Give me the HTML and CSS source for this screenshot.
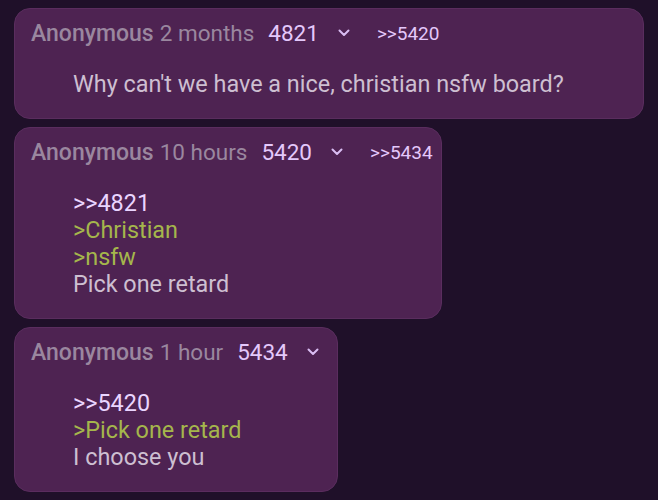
FILE: index.html
```html
<!DOCTYPE html>
<html lang="en">
<head>
    <meta charset="UTF-8">
    <meta name="viewport" content="width=device-width, initial-scale=1.0">
    <title>Thread</title>
    <link rel="stylesheet" href="styles.css">
</head>
<body>
    <main class="thread">
        <article class="post wide">
            <div class="post-head">
                <span class="name">Anonymous</span>
                <span class="time">2 months</span>
                <span class="post-no">4821</span>
                <span class="chevron"><svg width="12" height="8" viewBox="0 0 12 8"><path d="M1.5 1.5 6 6l4.5-4.5" fill="none" stroke="currentColor" stroke-width="2" stroke-linecap="round" stroke-linejoin="round"/></svg></span>
                <a class="backlink" href="#p5420">&gt;&gt;5420</a>
            </div>
            <div class="post-body">
                <p>Why can't we have a nice, christian nsfw board?</p>
            </div>
        </article>

        <article class="post" id="p5420">
            <div class="post-head">
                <span class="name">Anonymous</span>
                <span class="time">10 hours</span>
                <span class="post-no">5420</span>
                <span class="chevron"><svg width="12" height="8" viewBox="0 0 12 8"><path d="M1.5 1.5 6 6l4.5-4.5" fill="none" stroke="currentColor" stroke-width="2" stroke-linecap="round" stroke-linejoin="round"/></svg></span>
                <a class="backlink" href="#p5434">&gt;&gt;5434</a>
            </div>
            <div class="post-body">
                <p><a class="quotelink" href="#">&gt;&gt;4821</a></p>
                <p class="greentext">&gt;Christian</p>
                <p class="greentext">&gt;nsfw</p>
                <p>Pick one retard</p>
            </div>
        </article>

        <article class="post" id="p5434">
            <div class="post-head">
                <span class="name">Anonymous</span>
                <span class="time">1 hour</span>
                <span class="post-no">5434</span>
                <span class="chevron"><svg width="12" height="8" viewBox="0 0 12 8"><path d="M1.5 1.5 6 6l4.5-4.5" fill="none" stroke="currentColor" stroke-width="2" stroke-linecap="round" stroke-linejoin="round"/></svg></span>
            </div>
            <div class="post-body">
                <p><a class="quotelink" href="#p5420">&gt;&gt;5420</a></p>
                <p class="greentext">&gt;Pick one retard</p>
                <p>I choose you</p>
            </div>
        </article>
    </main>
</body>
</html>
```

FILE: styles.css
```css
* {
    margin: 0;
    padding: 0;
    box-sizing: border-box;
}
body {
    font-family: Roboto, 'Noto Sans', sans-serif;
    background-color: #1f1029;
    color: #cdbfd1;
}
.thread {
    display: flex;
    flex-direction: column;
    align-items: flex-start;
    gap: 8px;
    padding: 8px 14px;
}
.post {
    background-color: #4e2352;
    border: 1px solid #5a2d5e;
    border-radius: 16px;
    padding: 11px 8px 20px 16px;
}
.post.wide {
    align-self: stretch;
}
.post-head {
    display: flex;
    align-items: center;
    height: 26px;
    white-space: nowrap;
}
.name {
    font-size: 23px;
    font-weight: 500;
    color: #9a879f;
}
.time {
    font-size: 22.5px;
    color: #9a879f;
    margin-left: 6px;
}
.post-no {
    font-size: 22.5px;
    color: #e4c8fb;
    margin-left: 14px;
}
.chevron {
    display: flex;
    color: #d9bdf2;
    margin-left: 19px;
    margin-right: 10px;
}
.backlink {
    font-size: 19px;
    color: #e4c8fb;
    text-decoration: none;
    margin-left: 17px;
}
.post-body {
    padding: 25px 0 0 42px;
    font-size: 23.4px;
    line-height: 27px;
}
.quotelink {
    color: #ead5ff;
    text-decoration: none;
}
.greentext {
    color: #a5b64c;
}
```
